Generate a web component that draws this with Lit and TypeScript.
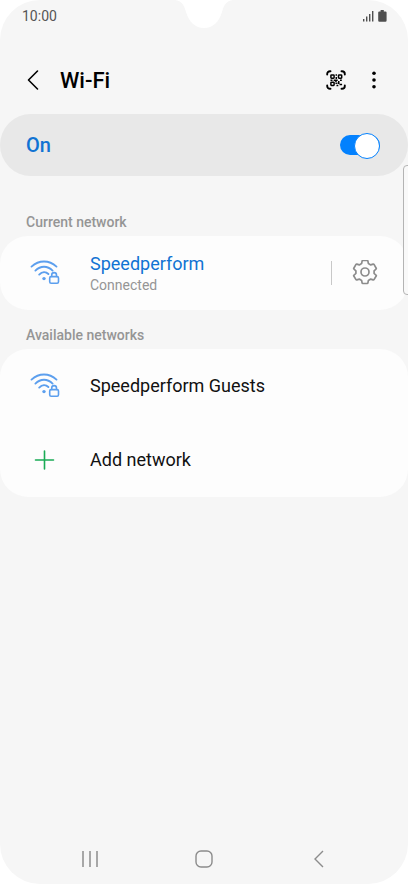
import { LitElement, html, svg, css } from "lit";
import { customElement, state } from "lit/decorators.js";

const wifiLockIcon = svg`
  <svg class="wifi" viewBox="0 0 30 26" aria-hidden="true">
    <g fill="none" stroke="currentColor" stroke-width="1.9" stroke-linecap="round">
      <path d="M1.5 6.6C9 -0.2 19 -0.2 26.500 6.600" />
      <path d="M5.400 10.600C10.600 5.500 17.400 5.500 22.600 10.600" />
      <path d="M9.200 14.600C12.200 11.500 15.800 11.500 18.400 14" />
      <rect x="19.700" y="16.600" width="8.800" height="6.600" rx="1.400" stroke-width="1.600" />
      <path d="M21.700 16.400V15a2.400 2.400 0 0 1 4.800 0V16.400" stroke-width="1.600" />
    </g>
    <circle cx="14" cy="18.600" r="1.700" fill="currentColor" />
  </svg>`;

@customElement("app-root")
export class AppRoot extends LitElement {
  @state() private wifiOn = true;

  static styles = css`
    :host {
      display: block;
      background: #fff;
      font-family: Roboto, "Liberation Sans", sans-serif;
      color: #111;
    }
    * {
      box-sizing: border-box;
    }
    button {
      font: inherit;
      color: inherit;
      background: none;
      border: 0;
      margin: 0;
      padding: 0;
      display: flex;
      align-items: center;
      justify-content: center;
      text-align: left;
    }
    svg {
      display: block;
      flex: none;
    }
    h1,
    h2,
    ul {
      margin: 0;
      padding: 0;
      list-style: none;
    }
    .phone {
      position: relative;
      display: flex;
      flex-direction: column;
      min-height: 100vh;
      background: #f6f6f6;
      border-radius: 40px;
      overflow: hidden;
    }
    .notch {
      position: absolute;
      top: 0;
      left: 50%;
      margin-left: -32px;
      width: 64px;
      height: 28px;
    }
    .edge {
      position: absolute;
      top: 165px;
      right: -4px;
      width: 9px;
      height: 130px;
      border: 1px solid #b4b4b4;
      border-radius: 4px;
      background: #f9f9f9;
    }
    .status {
      display: flex;
      align-items: center;
      justify-content: space-between;
      height: 32px;
      padding: 0 20px 0 22px;
      font-size: 14px;
      line-height: 16px;
      color: #555;
    }
    .header {
      display: flex;
      align-items: center;
      height: 82px;
      padding: 14px 22px 0 19px;
      color: #000;
    }
    .title {
      flex: 1;
      padding: 2px 0 0 13px;
      font-size: 22px;
      line-height: 28px;
      font-weight: 500;
    }
    .back {
      width: 28px;
      height: 32px;
    }
    .action {
      width: 24px;
      height: 32px;
      margin-left: 14px;
    }
    .master {
      display: flex;
      align-items: center;
      justify-content: space-between;
      height: 62px;
      padding: 0 28px 0 26px;
      border-radius: 31px;
      background: #e8e8e8;
      color: #1173d3;
      font-size: 20px;
      line-height: 24px;
      font-weight: 500;
    }
    .switch {
      appearance: none;
      position: relative;
      width: 40px;
      height: 20px;
      margin: 0;
      border-radius: 10px;
      background: #8c8c8c;
    }
    .switch:checked {
      background: #0381fe;
    }
    .switch::before {
      content: "";
      position: absolute;
      top: -2px;
      left: 0;
      width: 24px;
      height: 24px;
      border: 1px solid #8c8c8c;
      border-radius: 50%;
      background: #fff;
    }
    .switch:checked::before {
      left: auto;
      right: 0;
      border-color: #0381fe;
    }
    .label {
      padding: 17px 26px 6px;
      font-size: 14px;
      line-height: 16px;
      font-weight: 500;
      color: #959595;
    }
    .master + section .label {
      padding-top: 38px;
    }
    .card {
      border-radius: 28px;
      background: #fdfdfd;
    }
    .row {
      display: flex;
      align-items: center;
      min-height: 74px;
      padding-right: 30px;
    }
    .network {
      flex: 1;
      justify-content: flex-start;
      gap: 30px;
      min-height: 74px;
      padding-left: 30px;
    }
    .wifi {
      width: 30px;
      height: 26px;
      color: #5c9fee;
    }
    .plus {
      width: 30px;
      height: 20px;
    }
    .name {
      display: block;
      font-size: 18px;
      line-height: 24px;
    }
    .connected {
      color: #1173d3;
    }
    .detail {
      display: block;
      font-size: 14px;
      line-height: 18px;
      color: #959595;
    }
    .gear {
      height: 24px;
      padding-left: 20px;
      border-left: 1px solid #c8c8c8;
      color: #8c8c8c;
    }
    .nav {
      display: flex;
      justify-content: space-between;
      margin-top: auto;
      padding: 0 74px 9px;
      color: #8c8c8c;
    }
    .nav button {
      width: 32px;
      height: 32px;
    }
  `;

  private toggle(e: Event) {
    this.wifiOn = (e.target as HTMLInputElement).checked;
  }

  render() {
    return html`
      <div class="phone">
        <svg class="notch" viewBox="0 0 64 28" aria-hidden="true">
          <path fill="#fff" d="M3 0C10 1 12 5 14 12C17 22 23 28 32 28S47 22 50 12C52 5 54 1 61 0Z" />
        </svg>
        <div class="status">
          <span>10:00</span>
          <svg width="26" height="14" viewBox="0 0 26 14" aria-hidden="true">
            <g fill="#4f4f4f">
              <rect x="1" y="10" width="1.4" height="2.5" />
              <rect x="4" y="7.5" width="1.4" height="5" />
              <rect x="7" y="5" width="1.4" height="7.5" />
              <rect x="10" y="2" width="1.4" height="10.5" />
              <path d="M18.6 1h3.2v1.4h1.6a1.2 1.2 0 0 1 1.2 1.2v8a1.2 1.2 0 0 1-1.2 1.2h-6a1.2 1.2 0 0 1-1.2-1.2v-8a1.2 1.2 0 0 1 1.2-1.2h1.2z" />
            </g>
          </svg>
        </div>
        <header class="header">
          <button class="back" aria-label="Back">
            <svg width="14" height="22" viewBox="0 0 14 22" fill="none" stroke="currentColor" stroke-width="1.6" stroke-linecap="round" stroke-linejoin="round">
              <path d="M11.5 2L2.5 11L11.5 20" />
            </svg>
          </button>
          <h1 class="title">Wi-Fi</h1>
          <button class="action" aria-label="Scan QR code">
            <svg width="20" height="20" viewBox="0 0 20 20" fill="none" stroke="currentColor">
              <g stroke-width="1.9" stroke-linecap="round">
                <path d="M1.2 4.5V4A2.8 2.8 0 0 1 4 1.2h.5M15.5 1.2h.5A2.8 2.8 0 0 1 18.8 4v.5M18.8 15.5v.5a2.8 2.8 0 0 1-2.8 2.8h-.5M4.5 18.8H4A2.8 2.8 0 0 1 1.200 16v-.5" />
              </g>
              <g stroke-width="1.5">
                <rect x="4.900" y="5" width="3.200" height="3.200" rx=".6" />
                <rect x="12.500" y="5" width="3.200" height="3.200" rx=".6" />
                <rect x="4.900" y="12.200" width="3.200" height="3.200" rx=".6" />
                <path d="M10.300 4.200v1.600M10.300 7v2M4.500 10.200h2M7.700 10.200h4M9.200 11.300h1.500M10.200 12.400v1.600M12 11.800h1.500M11.500 13.300h2M13.500 14.600h2.600M10.500 15.500h1.800M14 10.300h1.800" />
              </g>
            </svg>
          </button>
          <button class="action" aria-label="More options">
            <svg width="4" height="18" viewBox="0 0 4 18" fill="currentColor">
              <circle cx="2" cy="2.300" r="1.800" />
              <circle cx="2" cy="9" r="1.800" />
              <circle cx="2" cy="15.700" r="1.800" />
            </svg>
          </button>
        </header>
        <div class="master">
          <label for="wifi-switch">${this.wifiOn ? "On" : "Off"}</label>
          <input id="wifi-switch" class="switch" type="checkbox" role="switch" .checked=${this.wifiOn} @change=${this.toggle} />
        </div>
        <section>
          <h2 class="label">Current network</h2>
          <div class="card row">
            <button class="network">
              ${wifiLockIcon}
              <span>
                <span class="name connected">Speedperform</span>
                <span class="detail">Connected</span>
              </span>
            </button>
            <button class="gear" aria-label="Network settings">
              <svg width="26" height="26" viewBox="0 1 26 26" fill="none" stroke="currentColor" stroke-width="1.700" stroke-linejoin="round">
                <path d="M10.800 1.500h4.400q.6 0 .7.600l.5 2.500 2.300 1.300 2.400-.8q.6-.2.900.3l2.200 3.800q.3.500-.2.900l-1.900 1.700v2.600l1.900 1.700q.5.400.2.900L22 20.600q-.3.500-.9.300l-2.400-.8-2.300 1.300-.5 2.500q-.1.600-.7.600h-4.400q-.6 0-.7-.6l-.5-2.500-2.300-1.300-2.400.8q-.6.200-.9-.3L1.800 17q-.3-.5.200-.9l1.900-1.700v-2.600L2 10.100q-.5-.4-.2-.9L4 5.400q.3-.5.900-.3l2.400.8 2.300-1.300.5-2.500q.1-.6.7-.6z" />
                <circle cx="13" cy="13" r="4" />
              </svg>
            </button>
          </div>
        </section>
        <section>
          <h2 class="label">Available networks</h2>
          <ul class="card">
            <li class="row">
              <button class="network">${wifiLockIcon}<span class="name">Speedperform Guests</span></button>
            </li>
            <li class="row">
              <button class="network">
                <svg class="plus" viewBox="0 0 30 20" fill="none" stroke="#1aab55" stroke-width="1.600" stroke-linecap="round" aria-hidden="true">
                  <path d="M14.500 1v18M5.500 10h18" />
                </svg>
                <span class="name">Add network</span>
              </button>
            </li>
          </ul>
        </section>
        <nav class="nav">
          <button aria-label="Recent apps">
            <svg width="18" height="18" viewBox="0 0 18 18" stroke="currentColor" stroke-width="1.500">
              <path d="M2 1v16M9 1v16M16 1v16" />
            </svg>
          </button>
          <button aria-label="Home">
            <svg width="18" height="18" viewBox="0 0 18 18" fill="none" stroke="currentColor" stroke-width="1.400">
              <rect x="1" y="1" width="16" height="16" rx="5" />
            </svg>
          </button>
          <button aria-label="Go back">
            <svg width="18" height="18" viewBox="0 0 18 18" fill="none" stroke="currentColor" stroke-width="1.400">
              <path d="M14 1L6 9l8 8" />
            </svg>
          </button>
        </nav>
        <div class="edge"></div>
      </div>
    `;
  }
}
